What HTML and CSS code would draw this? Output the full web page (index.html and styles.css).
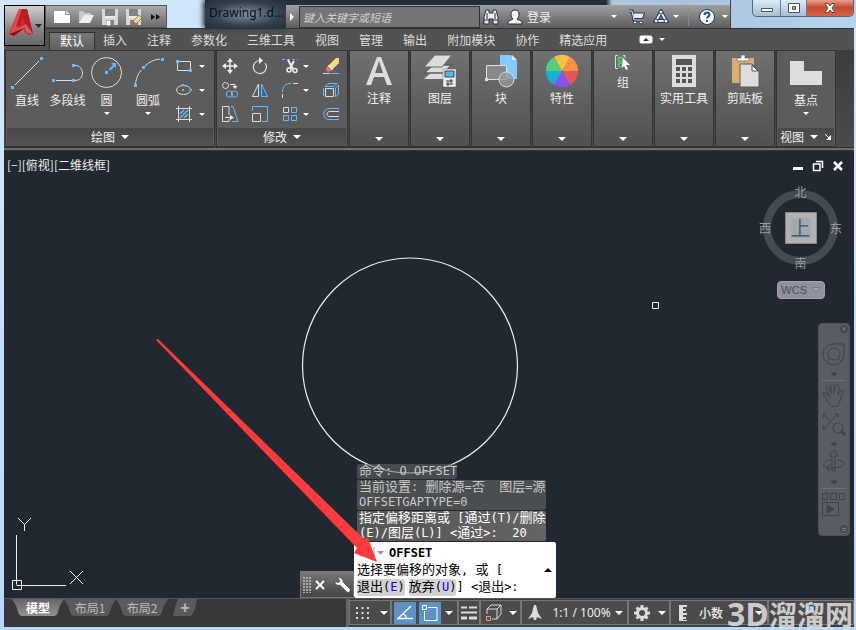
FILE: index.html
```html
<!DOCTYPE html>
<html lang="zh-CN">
<head>
<meta charset="utf-8">
<title>Drawing1</title>
<link rel="stylesheet" href="styles.css">
</head>
<body>
<div class="window">
  <header class="titlebar">
    <button class="app-button" aria-label="A">
      <svg width="40" height="40" viewBox="0 0 40 40"><path d="M14 3h8l6 25-8-1-2-6-4 1-3 7-7-2z" fill="#c92b31"/><path d="M14 3h3l-6 27-7-2z" fill="#e2464a"/><path d="M17 3h5l6 25-5 1-5-18-3 8-4 2z" fill="#b61d24"/><path d="M4 28l17-10 7 10-6-1-3-5-8 8z" fill="#dc5a5a"/><path d="M4 28l17-7-12 9z" fill="#8f1218"/><path d="M30 18h7l-3.500 4z" fill="#222b3a"/></svg>
    </button>
    <div class="quick">
      <button aria-label="新建"><svg width="18" height="16" viewBox="0 0 18 16"><path d="M1 2h11v4h5v8H1z" fill="#fff"/><path d="M13 2l4 3h-4z" fill="#eee"/></svg></button>
      <button aria-label="打开"><svg width="18" height="16" viewBox="0 0 18 16"><path d="M2 13V2h4l2 2h6v2H7z" fill="#c9c9c9"/><path d="M7 6h10l-4 8H1.500z" fill="#eee"/></svg></button>
      <button aria-label="保存"><svg width="18" height="18" viewBox="0 0 18 18"><path d="M1 1h16v16H1z" fill="#d8d8d8"/><path d="M4 1h10v7H4zM5 12h8v5H5z" fill="#858585"/><path d="M4 9h10M6 13h3v4H6z" stroke="#fff" fill="#fff"/></svg></button>
      <button aria-label="另存为"><svg width="18" height="18" viewBox="0 0 18 18"><path d="M1 1h15v16H1z" fill="#d8d8d8"/><path d="M4 1h9v7H4zM5 12h8v5H5z" fill="#858585"/><path d="M4 9h9" stroke="#fff"/><path d="M14 7l3 3-6 6-3-3z" fill="#f6d58a" stroke="#555" stroke-width=".6"/><path d="M8 13l3 3-2 1-3-2z" fill="#e65345"/></svg></button>
      <button aria-label="更多"><svg width="12" height="16" viewBox="0 0 12 16"><path d="M2 5l4 3-4 3zM7 5l4 3-4 3z" fill="#111"/></svg></button>
    </div>
    <div class="doc-title">Drawing1.d...</div>
    <div class="info">
      <button class="expand" aria-label="展开"><svg width="12" height="14" viewBox="0 0 12 14"><path d="M4 3l4 4-4 4z" fill="#fff"/></svg></button>
      <input class="search" type="text" placeholder="键入关键字或短语" aria-label="搜索">
      <button class="find" aria-label="查找"><svg width="16" height="16" viewBox="0 0 16 16"><path d="M3 1h3v3h4V1h3l2 7v7h-5v-5H6v5H1V8z" fill="#e8ecf2" stroke="#27313f"/><path d="M1 11h5M10 11h5M4 4v6M12 4v6" stroke="#27313f"/></svg></button>
      <button class="login"><svg width="16" height="16" viewBox="0 0 16 16"><path d="M8 1c3 0 4 2 4 4.500S11 9 10 10l5 2.500V15H1v-2.500L6 10C5 9 4 8 4 5.500S5 1 8 1z" fill="#f3f5f8" stroke="#27313f"/></svg><span>登录</span><i class="caret"></i></button>
      <button class="cart" aria-label="应用商店"><svg width="17" height="16" viewBox="0 0 17 16"><path d="M1 2h3l2 9h9" fill="none" stroke="#26355a" stroke-width="3"/><path d="M4.500 4h12l-2 5.500H6z" fill="#e7ebf2" stroke="#26355a"/><path d="M1 2h3l2 9h9" fill="none" stroke="#e7ebf2"/><circle cx="7" cy="13.500" r="1.500" fill="#fff" stroke="#26355a"/><circle cx="13" cy="13.500" r="1.500" fill="#fff" stroke="#26355a"/></svg></button>
      <button class="cloud" aria-label="连接"><svg width="16" height="16" viewBox="0 0 16 16"><path d="M8 3l5 9H3z" fill="none" stroke="#26355a" stroke-width="4"/><path d="M8 3l5 9H3z" fill="none" stroke="#e9edf3" stroke-width="2"/><circle cx="8" cy="3" r="2" fill="#eef" stroke="#26355a"/><circle cx="3" cy="12" r="2" fill="#eef" stroke="#26355a"/><circle cx="13" cy="12" r="2" fill="#eef" stroke="#26355a"/></svg><i class="caret"></i></button>
      <button class="help" aria-label="帮助"><svg width="18" height="18" viewBox="0 0 18 18"><circle cx="9" cy="9" r="7.500" fill="#fff" stroke="#26355a"/><path d="M6.500 7C6.500 3.500 12 4 11.500 7 11.300 8.500 9 8.700 9 10.500M9 12v2" fill="none" stroke="#1a4fb0" stroke-width="2"/></svg><i class="caret"></i></button>
    </div>
    <div class="win-buttons">
      <button aria-label="最小化"><svg width="14" height="12" viewBox="0 0 14 12"><path d="M1.500 6.500h11v3h-11z" fill="#fff" stroke="#555"/></svg></button>
      <button class="restore" aria-label="还原"><svg width="14" height="12" viewBox="0 0 14 12"><path d="M1.500 1.500h11v9h-11z" fill="#fff" stroke="#555"/><path d="M5.500 4.500h3v3h-3z" fill="#9ab" stroke="#555"/></svg></button>
      <button class="close" aria-label="关闭"><svg width="14" height="12" viewBox="0 0 14 12"><path d="M2 1.500h3l2 2.500 2-2.500h3L9 6l3 4.500H9L7 8l-2 2.500H2L5 6z" fill="#fff" stroke="#555"/></svg></button>
    </div>
  </header>

  <nav class="tabs">
    <button class="tab active">默认</button><button class="tab">插入</button><button class="tab">注释</button><button class="tab">参数化</button><button class="tab">三维工具</button><button class="tab">视图</button><button class="tab">管理</button><button class="tab">输出</button><button class="tab">附加模块</button><button class="tab">协作</button><button class="tab">精选应用</button>
    <button class="collapse" aria-label="最小化面板"><svg width="14" height="9" viewBox="0 0 14 9"><rect x=".5" y=".5" width="13" height="8" rx="2" fill="#fff"/><path d="M4 6l3-3 3 3z" fill="#333"/></svg><i class="caret"></i></button>
  </nav>

  <section class="ribbon">
    <div class="panel draw">
      <div class="tools">
        <button class="tool"><svg width="34" height="34" viewBox="0 0 34 34"><path d="M5 29L29 5" stroke="#ddd"/><path d="M1 30h3v3H1zM30 1h3v3h-3z" fill="#66bbff"/></svg>直线</button>
        <button class="tool"><svg width="34" height="34" viewBox="0 0 34 34"><path d="M5 24.500h16M24 9.500c10 0 10 15 0 15" fill="none" stroke="#ddd"/><path d="M1 23h3v3H1zM21 23h3v3h-3zM21 8h3v3h-3z" fill="#66bbff"/></svg>多段线</button>
        <button class="tool"><svg width="34" height="34" viewBox="0 0 34 34"><circle cx="16.500" cy="16.500" r="15" fill="none" stroke="#ddd"/><path d="M15 15h3v3h-3zM21 7h5v5l-1.500-1.500-4 4-1.500-1.500 4-4z" fill="#66bbff"/></svg>圆<i class="caret"></i></button>
        <button class="tool"><svg width="34" height="34" viewBox="0 0 34 34"><path d="M4.500 28c1-7 3-11 6-14M14 10c4-4 9-6.500 15-7" fill="none" stroke="#ddd"/><path d="M3 28h3v3H3zM11 10h3v3h-3zM30 2h3v3h-3z" fill="#66bbff"/></svg>圆弧<i class="caret"></i></button>
        <div class="small-tools">
          <button class="small" aria-label="矩形"><svg width="18" height="18" viewBox="0 0 18 18"><path d="M2.500 4.500h13v9h-13z" fill="none" stroke="#ddd"/><path d="M1 3h3v3H1zM14 12h3v3h-3z" fill="#66bbff"/></svg><i class="caret"></i></button>
          <button class="small" aria-label="椭圆"><svg width="18" height="18" viewBox="0 0 18 18"><ellipse cx="8.500" cy="9" rx="7" ry="4.500" fill="none" stroke="#ddd"/><path d="M7 3h2v2H7zM7 8h2v2H7zM15 8h2v2h-2z" fill="#66bbff"/></svg><i class="caret"></i></button>
          <button class="small" aria-label="图案填充"><svg width="18" height="18" viewBox="0 0 18 18"><path d="M1 3.500h16M1 14.500h16M3.500 1v16M14.500 1v16" stroke="#ddd"/><path d="M5 9l4-4M5 13l8-8M9 13l4-4" stroke="#66bbff" stroke-width="1.500"/></svg><i class="caret"></i></button>
        </div>
      </div>
      <button class="panel-title">绘图<i class="caret big"></i></button>
    </div>

    <div class="panel modify">
      <div class="modify-grid">
        <button class="small" aria-label="移动"><svg width="18" height="18" viewBox="0 0 18 18"><path d="M9 3v12M3 9h12" stroke="#eee" stroke-width="1.500"/><path d="M9 1l3 4H6zM9 17l3-4H6zM1 9l4-3v6zM17 9l-4-3v6z" fill="#eee"/></svg></button>
        <button class="small" aria-label="旋转"><svg width="18" height="18" viewBox="0 0 18 18"><path d="M14 6a6.500 6.500 0 1 1-5-2.500" fill="none" stroke="#ddd" stroke-width="1.200"/><path d="M8 0l4 3.500L8 7z" fill="#eee"/></svg></button>
        <button class="small" aria-label="修剪"><svg width="18" height="18" viewBox="0 0 18 18"><path d="M1 2.500h16" stroke="#66bbff" stroke-dasharray="3 2"/><path d="M7 3l5 9M13 4l-4 7" stroke="#eee" stroke-width="2"/><circle cx="8" cy="13" r="2" fill="none" stroke="#eee" stroke-width="1.500"/><circle cx="14" cy="13.500" r="2" fill="none" stroke="#eee" stroke-width="1.500"/></svg><i class="caret"></i></button>
        <button class="small" aria-label="删除"><svg width="18" height="18" viewBox="0 0 18 18"><path d="M17 1v5L9 14l-4-4 9-9z" fill="#ffd783"/><path d="M6 9l4 4-3 2-3-1v-3z" fill="#f26565"/><path d="M7 8l4 4-1 1-4-4z" fill="#fff"/><path d="M1 16.500h7" stroke="#ddd"/><path d="M9 16.500h8" stroke="#66bbff"/></svg></button>
        <button class="small" aria-label="复制"><svg width="18" height="18" viewBox="0 0 18 18"><circle cx="4.500" cy="4.500" r="3" fill="none" stroke="#ddd"/><path d="M9 3.500h5V7" fill="none" stroke="#eee"/><path d="M11.500 5h5L14 8z" fill="#eee"/><circle cx="8.500" cy="13" r="3.200" fill="none" stroke="#66bbff"/><circle cx="13.500" cy="13" r="3.200" fill="none" stroke="#66bbff"/></svg></button>
        <button class="small" aria-label="镜像"><svg width="18" height="18" viewBox="0 0 18 18"><path d="M7.500 3v12.500h-6z" fill="none" stroke="#ddd"/><path d="M10.500 3v12.500h6z" fill="#286b9d" stroke="#66bbff"/></svg></button>
        <button class="small" aria-label="圆角"><svg width="18" height="18" viewBox="0 0 18 18"><path d="M1.500 11C1.500 5 5 2.500 10 2.500" fill="none" stroke="#66bbff"/><path d="M12 2.500h5M1.500 13v4" stroke="#ddd"/></svg><i class="caret"></i></button>
        <button class="small" aria-label="分解"><svg width="18" height="18" viewBox="0 0 18 18"><path d="M3.500 7.500h8v8h-8z" fill="none" stroke="#ddd"/><path d="M3 5.500l3-3h9l-3 3zM13.500 7l3-3v9l-3 3zM1.500 7v8" fill="none" stroke="#66bbff"/></svg></button>
        <button class="small" aria-label="拉伸"><svg width="18" height="18" viewBox="0 0 18 18"><path d="M7 1.500H1.500v15H8V14M8 10V1.500H7" fill="none" stroke="#ddd"/><path d="M10 1.500h2l5 15h-6" fill="none" stroke="#66bbff"/><path d="M4 12.500h6" stroke="#eee"/><path d="M9 10l4 2.500L9 15z" fill="#eee"/></svg></button>
        <button class="small" aria-label="缩放"><svg width="18" height="18" viewBox="0 0 18 18"><path d="M1.500 6V1.500h15v15H11" fill="none" stroke="#66bbff"/><path d="M1.500 8.500h8v8h-8z" fill="none" stroke="#ddd"/></svg></button>
        <button class="small" aria-label="阵列"><svg width="18" height="18" viewBox="0 0 18 18"><path d="M2.500 2.500h5v5h-5z" fill="none" stroke="#ddd"/><path d="M10.500 2.500h5v5h-5zM2.500 10.500h5v5h-5zM10.500 10.500h5v5h-5z" fill="none" stroke="#66bbff"/></svg><i class="caret"></i></button>
        <button class="small" aria-label="偏移"><svg width="18" height="18" viewBox="0 0 18 18"><path d="M17 3.500H7c-7 0-7 11 0 11h10" fill="none" stroke="#66bbff"/><path d="M17 6.500H8c-4 0-4 5 0 5h9" fill="none" stroke="#ddd"/></svg></button>
      </div>
      <button class="panel-title">修改<i class="caret big"></i></button>
    </div>

    <button class="panel tile"><svg width="34" height="34" viewBox="0 0 34 34"><path d="M4 31L15 3h4l11 28h-5l-3-8H12l-3 8zM13 19h8L17 7z" fill="#ddd"/></svg><span>注释</span><i class="caret big"></i></button>
    <button class="panel tile"><svg width="34" height="34" viewBox="0 0 34 34"><path d="M1 25l9-8h19l-9 8z" fill="#ddd"/><path d="M1 19l9-8h19l-9 8z" fill="#ddd" stroke="#5c5c5c" stroke-width="1.500"/><path d="M1 13L12 1h17L19 13z" fill="#ddd" stroke="#666"/><path d="M20 15h13v18H20z" fill="#eee" stroke="#666" stroke-width=".5"/><path d="M22 17h9v6h-9z" fill="#55b6f5" stroke="#444"/><path d="M23 27h7M23 30h7M28 25v4M25 28v4" stroke="#333"/></svg><span>图层</span><i class="caret big"></i></button>
    <button class="panel tile"><svg width="34" height="34" viewBox="0 0 34 34"><path d="M16 1h11l6 6v18H16z" fill="#82caff"/><path d="M28 1l5 5h-5z" fill="#d9eeff"/><path d="M2.500 11.500h20v14h-20z" fill="#888" stroke="#ddd"/><circle cx="22.500" cy="25.500" r="7.500" fill="#999c" stroke="#ddd"/><path d="M1 24h3v3H1z" fill="#ddd"/></svg><span>块</span><i class="caret big"></i></button>
    <button class="panel tile"><svg width="34" height="34" viewBox="0 0 34 34"><path d="M17 17L9 3.100a16 16 0 0 1 16 0z" fill="#ffc23e"/><path d="M17 17l8-13.900A16 16 0 0 1 33 17z" fill="#ff9242"/><path d="M17 17h16a16 16 0 0 1-8 13.900z" fill="#e55755"/><path d="M17 17l8 13.900a16 16 0 0 1-16 0z" fill="#8851f5"/><path d="M17 17L9 30.900A16 16 0 0 1 1 17z" fill="#18afd0"/><path d="M17 17H1A16 16 0 0 1 9 3.100z" fill="#50cf82"/></svg><span>特性</span><i class="caret big"></i></button>
    <button class="panel tile short"><svg width="18" height="18" viewBox="0 0 18 18"><path d="M4 1.500H1.500v13H4M9 1.500h2V4" fill="none" stroke="#ddd"/><path d="M4.500 3.500h4v4h-4z" fill="none" stroke="#52cf78" stroke-width="1.500"/><circle cx="6.500" cy="11" r="2" fill="none" stroke="#52cf78" stroke-width="1.500"/><path d="M9 4l7 7h-4l2 4-2 1-2-4-2 2z" fill="#fff"/></svg><span>组</span><i class="caret big"></i></button>
    <button class="panel tile"><svg width="34" height="34" viewBox="0 0 34 34"><path d="M5 1h24v32H5z" fill="#ddd"/><path d="M9 5h16v6H9zM9 13h4v4H9zM15 13h4v4h-4zM21 13h4v4h-4zM9 19h4v4H9zM15 19h4v4h-4zM21 19h4v4h-4zM9 25h4v4H9zM15 25h4v4h-4zM21 25h4v4h-4z" fill="#555"/></svg><span>实用工具</span><i class="caret big"></i></button>
    <button class="panel tile"><svg width="34" height="34" viewBox="0 0 34 34"><path d="M4 4h22v25H4z" fill="#dcad70"/><path d="M9 4h4V1h4v3h4v3H9z" fill="#fff" stroke="#666" stroke-width=".7"/><path d="M12 10h12l7 7v16H12z" fill="#ddd" stroke="#5c5c5c"/><path d="M24 11v6h6z" fill="#fff" stroke="#555"/></svg><span>剪贴板</span><i class="caret big"></i></button>
    <div class="panel view">
      <button class="tool"><svg width="34" height="34" viewBox="0 0 34 34"><path d="M1 5h14v10h18v14H1z" fill="#ddd"/></svg>基点<i class="caret"></i></button>
      <button class="panel-title">视图<i class="caret big"></i><svg width="8" height="8" viewBox="0 0 8 8"><path d="M1 1l5 5" stroke="#fff"/><path d="M7 2v5H2z" fill="#fff"/></svg></button>
    </div>
  </section>

  <main class="canvas">
    <svg class="layer" aria-hidden="true"><g transform="translate(-4 -151)" fill="none" stroke="#eee">
      <circle cx="410" cy="365.500" r="107.500" stroke-width="1.200"/>
      <path d="M652.500 302.500h6v6h-6z"/>
      <path d="M12.500 580.500h9v9h-9zM16.500 584.500V535M16.500 585.500H66M18 518l6.500 6.500L31 518M24.500 524v7M70 571l13 13M83 571l-13 13"/>
    </g></svg>
    <div class="view-label">[−][俯视][二维线框]</div>
    <div class="view-controls">
      <button aria-label="最小化"><svg width="12" height="12" viewBox="0 0 12 12"><path d="M1 7h10v3H1z" fill="#fff"/></svg></button>
      <button aria-label="还原"><svg width="12" height="12" viewBox="0 0 12 12"><path d="M1.500 4h6.500v6.500H1.500zM4 1.500h6.500V8" fill="none" stroke="#fff" stroke-width="1.500"/></svg></button>
      <button aria-label="关闭"><svg width="12" height="12" viewBox="0 0 12 12"><path d="M2 2l8 8M10 2l-8 8" stroke="#fff" stroke-width="2.500"/></svg></button>
    </div>
    <div class="cube"><span class="n">北</span><span class="w">西</span><button class="face">上</button><span class="e">东</span><span class="s">南</span></div>
    <button class="wcs">WCS<svg width="10" height="8" viewBox="0 0 10 8"><path d="M1 1.500h8L5 6z" fill="#a2a3b1" stroke="#7c7d88"/></svg></button>
    <div class="navbar">
      <svg width="32" height="213" viewBox="0 0 32 213" fill="none" stroke="#3d434c"><circle cx="26" cy="6" r="3.500" fill="#4a5056"/><path d="M24.500 4.500l3 3m0-3l-3 3" stroke="#777"/>
        <path d="M16 21h10v10a10.500 10.500 0 1 1-10-10z"/><circle cx="16" cy="31" r="6"/><path d="M9 38l3-3M23 38l-3-3"/><path d="M13 50h6l-3 3z" fill="#3d434c"/><path d="M4 57.500h24M4 165.500h24" stroke="#6b7075"/>
        <path d="M9 76c-5-5-5-7-2-6l4 3-3-9c0-2 2-2 3 0l2 6V62c0-2 2-2 3 0v8l2-7c1-2 3-1 3 1l-1 8 3-5c1-1 3 0 2 2l-4 12c-2 4-10 4-12-5z"/>
        <path d="M5 91l15 15M20 91L5 106M5 95v-4h4M16 91h4v4M5 102v4h4"/><circle cx="20" cy="105" r="5" fill="#575d62"/><path d="M23 108l4 4" stroke-width="3"/><path d="M13 120h6l-3 3z" fill="#3d434c"/>
        <path d="M14 148v-15h-3l5-6 4 6h-3v15z"/><path d="M13 137c-8 1-10 6-4 8m10-8c10 1 9 7-3 8H9m3-3l-4 3 4 3"/><path d="M13 158h6l-3 3z" fill="#3d434c"/>
        <path d="M4.500 170.500h5v6h-5zM12.500 170.500h6v6h-6zM21.500 170.500h5v6h-5zM4.500 179.500h16v13h-16z"/><path d="M9 182v8l7-4z" fill="#3d434c"/><circle cx="26" cy="206" r="3.500" fill="#4a5056"/><path d="M24 205.500h4M24 207.500h4" stroke="#777"/></svg>
    </div>
    <div class="command">
      <div class="history faint short-line"><b>命令</b>: O OFFSET</div>
      <div class="history faint"><b>当前设置</b>: <b>删除源</b>=<b>否</b>&nbsp; <b>图层</b>=<b>源</b><br>OFFSETGAPTYPE=0</div>
      <div class="history"><b>指定偏移距离或</b> [<b>通过</b>(T)/<b>删除</b><br>(E)/<b>图层</b>(L)] &lt;<b>通过</b>&gt;:&nbsp; 20</div>
      <div class="command-row">
        <div class="grip"><svg width="50" height="20" viewBox="0 0 50 20"><path d="M3 2v16M6 2v16M9 2v16" stroke="#aaa" stroke-width="2" stroke-dasharray="2 1"/><path d="M15 6l8 8M23 6l-8 8" stroke="#fff" stroke-width="2"/><path d="M37 3c3-1 5 1 5 4l7 7c1 2-1 4-3 3l-7-7c-3 1-5-1-5-4l3 2 2-2z" fill="#fff" stroke="#333" stroke-width=".5"/></svg></div>
        <div class="prompt">
          <div class="current"><svg width="28" height="14" viewBox="0 0 28 14"><path d="M3 1v9h14V1" fill="none" stroke="#77b7ec"/><path d="M20 5h7l-3.500 4z" fill="#999"/></svg><strong>OFFSET</strong></div>
          <div><b>选择要偏移的对象</b>, <b>或</b> [</div>
          <div class="options"><button class="option"><b>退出</b>(<em>E</em>)</button><button class="option"><b>放弃</b>(<em>U</em>)</button><span>] &lt;<b>退出</b>&gt;:</span></div>
          <button class="more" aria-label="历史记录"></button>
        </div>
      </div>
    </div>
    <svg class="layer over" aria-hidden="true"><path transform="translate(-4 -151)" d="M156 340l2-1 206 200 4-1 9 24-23-9 3-5z" fill="#ff3b3b"/></svg>
  </main>

  <footer class="bottom">
    <div class="sheets"><button class="sheet selected">模型</button><button class="sheet">布局1</button><button class="sheet">布局2</button><button class="sheet add">+</button></div>
    <div class="status">
      <div class="group grid-mode"><button aria-label="栅格"><svg width="20" height="20" viewBox="0 0 20 20"><path d="M3 5h14M3 10h14M3 15h14" stroke="#ddd" stroke-width="2" stroke-dasharray="2 3.500"/></svg></button><i class="caret big"></i></div>
      <div class="group snaps"><button class="on" aria-label="极轴"><svg width="22" height="22" viewBox="0 0 22 22"><path d="M17 4L4 16.500h15M9 12c3 1 3 2 3 5" fill="none" stroke="#fff" stroke-width="1.300"/></svg></button><button class="on" aria-label="对象捕捉"><svg width="22" height="22" viewBox="0 0 22 22"><path d="M9 5.500h9v13H5.500V9" fill="none" stroke="#fff"/><path d="M3.500 3.500h4v4h-4z" fill="none" stroke="#fff"/></svg></button><i class="caret big"></i></div>
      <div class="group weight"><button aria-label="线宽"><svg width="18" height="18" viewBox="0 0 18 18"><path d="M1 3.500h6M9 3.500h8M1 8.500h16" stroke="#ddd" stroke-width="2"/><path d="M1 14h6M9 14h8" stroke="#ddd" stroke-width="3"/></svg></button></div>
      <div class="group iso"><button aria-label="三维对象捕捉"><svg width="20" height="20" viewBox="0 0 20 20"><path d="M3 11V6h10v10H8M3 6l4-4h10v9l-4 5M13 6l4-4" fill="none" stroke="#ddd"/><path d="M2.500 13.500h4v4h-4z" fill="none" stroke="#f0a070"/></svg></button><i class="caret big"></i></div>
      <div class="group scale"><button aria-label="注释可见性"><svg width="18" height="20" viewBox="0 0 18 20"><path d="M8 2h2l2 8 4 6-5-2-1 3H8l-1-3-5 2 4-6z" fill="#ddd"/></svg></button><button class="zoom">1:1 / 100%<i class="caret big"></i></button></div>
      <div class="group gear"><button aria-label="切换工作空间"><svg width="18" height="18" viewBox="0 0 18 18"><circle cx="9" cy="9" r="4.500" fill="none" stroke="#ddd" stroke-width="3"/><path d="M9 1v3M9 14v3M1 9h3M14 9h3M3.500 3.500l2 2M12.500 12.500l2 2M14.500 3.500l-2 2M5.500 12.500l-2 2" stroke="#ddd" stroke-width="3"/></svg></button><i class="caret big"></i></div>
      <div class="group units"><button><svg width="10" height="18" viewBox="0 0 10 18"><path d="M1 1h8v2H5v2h3v2H5v2h4v2H5v2h3v2H5v1h4v1H1z" fill="#ddd"/></svg><span>小数</span></button><i class="caret big"></i></div>
      <div class="group last"><button aria-label="隔离对象"><svg width="22" height="20" viewBox="0 0 22 20"><path d="M6 3h8v6H6z" fill="#67a4d5"/><path d="M12 12h5v5h-5z" fill="none" stroke="#e8946a"/></svg></button></div>
      <div class="watermark"><span>3D</span>溜溜网</div>
    </div>
  </footer>
</div>
</body>
</html>
```
FILE: styles.css
```css
*, *::before { box-sizing: border-box; }
body { margin: 0; background: #b9d5ef; color: #eee; font: 12px/16px "Noto Sans CJK SC", sans-serif; }
button { display: flex; align-items: center; margin: 0; padding: 0; border: 0; background: none; color: inherit; font: inherit; white-space: nowrap; }
svg { display: block; flex: none; }
i { font-style: normal; }
.caret { flex: none; border: 3px solid transparent; border-top-color: #fff; border-bottom: 0; }
.caret.big { border-width: 4px 4px 0; }

.window { display: flex; flex-direction: column; min-height: 100vh; padding: 0 2px 3px 4px; background: linear-gradient(#d7e9f9, #b7d8fb); }

.titlebar { position: relative; display: flex; height: 28px; margin: 0 -2px 0 -4px; padding-left: 45px; background: linear-gradient(90deg, #d4e7f8, #cfe6fb 24%, #a9c4dd 80%, #b8d3ee); }
.app-button { position: absolute; z-index: 2; left: 4px; top: 5px; width: 41px; height: 41px; border: 1px solid #000; background: linear-gradient(#cfcfcf, #858585 60%, #666); }
.quick { display: flex; align-items: center; gap: 6px; width: 122px; height: 23px; margin-top: 5px; padding-left: 7px; border: 1px solid #555; background: linear-gradient(#aaa, #6b6b6b); }
.doc-title { width: 81px; margin-left: 38px; padding: 5px 0 0 4px; overflow: hidden; background: radial-gradient(ellipse at center, #8392a1, #34404d 60%, #222d38); box-shadow: -2px 0 5px #222d38; color: #080c10; font: 12px/16px "Noto Sans", sans-serif; white-space: nowrap; }
.info { display: flex; flex: 0 0 445px; align-items: center; padding-top: 5px; border-right: 1px solid #444; background: linear-gradient(90deg, #222e3a 320px, transparent 326px) 0 0 / 100% 5px no-repeat, linear-gradient(#a0a0a0, #5d5d5d) 0 5px / 100% 23px no-repeat; }
.expand { width: 13px; }
.search { width: 181px; height: 22px; padding: 0 3px; border: 1px solid #333; border-radius: 0; background: #757575; color: #ddd; font: italic 11px/16px "Noto Sans CJK SC", sans-serif; }
.search::placeholder { color: #d0d0d0; opacity: 1; }
.find { margin-left: 3px; }
.login { flex: 1; gap: 4px; margin-left: 8px; }
.login .caret { margin-left: auto; }
.cart { margin-left: 11px; }
.cloud { gap: 4px; margin-left: 8px; }
.help { gap: 6px; margin: 0 2px 0 9px; padding-left: 9px; border-left: 1px solid #888; }
.win-buttons { display: flex; height: 17px; margin-right: 2px; margin-left: auto; overflow: hidden; border: 1px solid #54687e; border-top: 0; border-radius: 0 0 5px 5px; background: linear-gradient(#dcebf8, #a5bed5); }
.win-buttons button { justify-content: center; width: 28px; border-right: 1px solid #6b8097; }
.win-buttons .restore { width: 26px; }
.win-buttons .close { width: 46px; border: 0; background: linear-gradient(#e5a18e, #c64930 45%, #d66248); }

.tabs { display: flex; height: 22px; padding: 3px 0 0 45px; border-top: 1px solid #333; background: #525252; }
.tab { height: 18px; padding: 0 10px 2px; color: #ddd; }
.tab.active { padding: 0 10px 2px; border: 1px solid #303030; border-width: 1px 1px 0; background: linear-gradient(#777, #606060); color: #fff; }
.tab.active { margin-right: -2px; }
.collapse { gap: 6px; height: 15px; margin-left: 22px; }

.ribbon { display: flex; gap: 1px; height: 101px; padding: 0 1px 3px; border-bottom: 1px solid #333; background: linear-gradient(#2e2e2e, #2e2e2e) 0 97px / 100% 1px no-repeat, linear-gradient(#6e6e6e, #6e6e6e) 0 98px / 100% 2px no-repeat, linear-gradient(#3c3c3c, #4b4b4b); }
.panel { display: flex; flex-direction: column; border: 1px solid #343434; background: #5c5c5c; }
.draw { width: 210px; }
.tools { display: grid; flex: 1; grid-template-columns: 42px 39px 39px 44px 1fr; padding-top: 3px; }
.tool { flex-direction: column; justify-content: flex-start; padding-top: 2px; }
.tool svg { margin-bottom: 2px; }
.tool .caret { margin-top: 4px; }
.small-tools { display: grid; grid-template-rows: repeat(3, 24px); }
.small { gap: 6px; padding-left: 5px; }
.panel-title { justify-content: center; gap: 6px; height: 18px; margin: 0 1px; background: linear-gradient(#484848, #525252); }
.modify { width: 132px; }
.modify-grid { display: grid; flex: 1; grid-template-columns: 30px 30px 41px 1fr; grid-template-rows: repeat(3, 24px); padding-top: 3px; }
.modify-grid .small { gap: 4px; padding-left: 4px; }
.tile { align-items: center; width: 60px; padding: 3px 0 5px; background: linear-gradient(#717171, #505050); }
.tile span { margin-top: 2px; }
.tile .caret { margin-top: auto; }
.view { width: 60px; }
.view .tool { flex: 1; padding-top: 5px; }

.canvas { position: relative; flex: 1; overflow: hidden; background: #212830; }
.layer { position: absolute; inset: 0; width: 100%; height: 100%; }
.over { z-index: 3; pointer-events: none; }
.view-label { padding: 6px 3px; }
.view-controls { position: absolute; top: 9px; right: 10px; display: flex; gap: 8px; }
.cube { position: absolute; top: 33px; right: 10px; display: grid; grid-template: 16px 55px 16px / 16px 55px 16px; place-items: center; color: #9a9ea2; }
.cube::before { content: ""; position: absolute; inset: 6px; border: 8px solid #444b53; border-radius: 50%; }
.cube span { position: relative; }
.n, .s { grid-column: 2; }
.w { grid-column: 1; }
.face { position: relative; justify-content: center; width: 32px; height: 32px; border: 1px solid #888; background: linear-gradient(#9eaab1, #9eaab1) center / 20px 20px no-repeat, #b1b1b1; color: #555c63; font-size: 20px; line-height: 22px; }
.wcs { position: absolute; top: 130px; right: 29px; gap: 4px; height: 18px; padding: 0 3px; border: 1px solid #a0a2ad; border-radius: 4px; background: #9091a0; color: #4c4e59; font: 11px/16px "Liberation Sans", sans-serif; }
.navbar { position: absolute; top: 172px; right: 4px; border: 1px solid #4b5157; border-radius: 4px; background: #575d62; }
.navbar svg { margin: -1px; }

.command { position: absolute; bottom: 0; left: 296px; display: flex; flex-direction: column; font: 12px/15px "DejaVu Sans Mono", "Noto Sans CJK SC", monospace; }
.command b { font: 13px/0 "Noto Sans CJK SC", sans-serif; }
.history { width: 189px; margin: 0 0 1px 57px; padding-left: 2px; border-radius: 2px; background: linear-gradient(90deg, #565656, #646464); color: #fff; white-space: nowrap; }
.faint { background: #4b4e51; color: #c8c8c8; }
.short-line { width: 100px; background: #6a6c6e80; }
.command-row { display: flex; align-items: flex-end; }
.grip { display: flex; align-items: center; width: 54px; height: 27px; border: 1px solid #777; background: linear-gradient(#777, #444); }
.prompt { position: relative; width: 202px; padding: 2px 3px; border-radius: 2px; background: #fff; color: #000; line-height: 17px; }
.current { display: flex; align-items: center; gap: 4px; height: 18px; }
.options { display: flex; gap: 4px; }
.option { display: block; border-radius: 3px; background: #d2d2d2; }
.option em { color: #00f; font-style: normal; }
.options span { margin-left: -4px; }
.more { position: absolute; top: 26px; right: 4px; border: 4px solid transparent; border-top: 0; border-bottom-color: #000; }

.bottom { display: flex; justify-content: space-between; height: 29px; border-top: 1px solid #555; background: #383838; }
.sheets { display: flex; padding-left: 8px; }
.sheet { justify-content: center; width: 52px; height: 17px; clip-path: polygon(0 0, 100% 0, 92% 40%, 87% 90%, 82% 100%, 18% 100%, 13% 90%, 8% 40%); background: #5b5b5b; color: #bbb; }
.selected { background: linear-gradient(#666, #929292); color: #fff; font-weight: bold; }
.add { width: 24px; margin-left: 5px; clip-path: polygon(20% 0, 100% 0, 92% 60%, 75% 100%, 0 100%, 8% 50%); font: bold 16px/16px "Liberation Sans", sans-serif; }
.status { position: relative; display: flex; width: 508px; padding: 1px 0 2px; border: 1px solid #666; border-width: 0 0 0 3px; background: #3e3e3e; }
.group { display: flex; align-items: center; justify-content: center; gap: 5px; height: 25px; border: 1px solid #777; background: #4b4b4b; }
.grid-mode { width: 42px; gap: 7px; }
.snaps { justify-content: flex-start; width: 67px; gap: 3px; padding-left: 2px; }
.snaps .caret { margin-left: 1px; }
.on { background: #5e91c5; }
.weight { width: 22px; }
.iso { width: 41px; }
.scale { width: 107px; gap: 8px; }
.zoom { gap: 4px; font-family: "Noto Sans", sans-serif; }
.gear { width: 42px; gap: 7px; }
.units { justify-content: flex-start; width: 98px; gap: 32px; padding-left: 7px; }
.units button { gap: 11px; font-weight: 500; }
.last { flex: 1; }
.watermark { position: absolute; right: 1px; bottom: -3px; display: flex; align-items: center; height: 32px; color: #dddddde0; font: bold 28px/32px "Noto Sans CJK SC", sans-serif; white-space: nowrap; }
.watermark span { font: bold 32px/32px "Open Sans", sans-serif; }
```
